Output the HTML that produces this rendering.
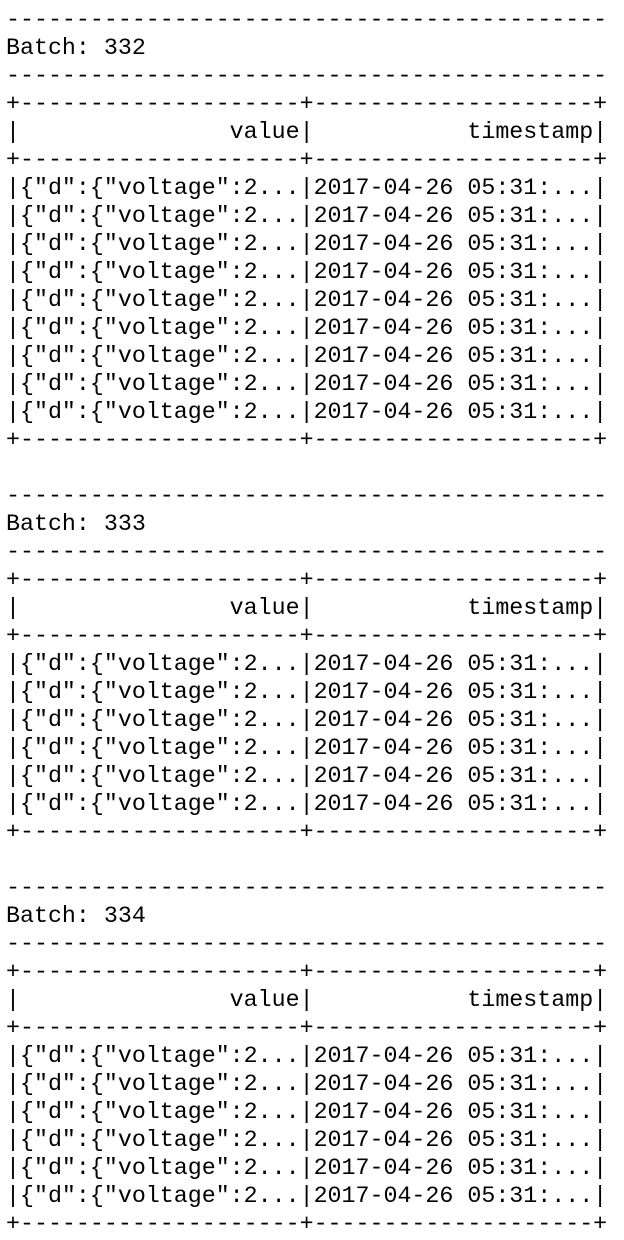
<!DOCTYPE html>
<html><head><meta charset="utf-8"><style>
html,body{margin:0;padding:0;background:#fff;width:624px;height:1240px;overflow:hidden}
pre{margin:0;position:absolute;left:6px;top:6px;font-family:"Liberation Mono",monospace;font-size:23.3px;line-height:28px;color:#000}
</style></head><body><pre>-------------------------------------------
Batch: 332
-------------------------------------------
+--------------------+--------------------+
|               value|           timestamp|
+--------------------+--------------------+
|{"d":{"voltage":2...|2017-04-26 05:31:...|
|{"d":{"voltage":2...|2017-04-26 05:31:...|
|{"d":{"voltage":2...|2017-04-26 05:31:...|
|{"d":{"voltage":2...|2017-04-26 05:31:...|
|{"d":{"voltage":2...|2017-04-26 05:31:...|
|{"d":{"voltage":2...|2017-04-26 05:31:...|
|{"d":{"voltage":2...|2017-04-26 05:31:...|
|{"d":{"voltage":2...|2017-04-26 05:31:...|
|{"d":{"voltage":2...|2017-04-26 05:31:...|
+--------------------+--------------------+

-------------------------------------------
Batch: 333
-------------------------------------------
+--------------------+--------------------+
|               value|           timestamp|
+--------------------+--------------------+
|{"d":{"voltage":2...|2017-04-26 05:31:...|
|{"d":{"voltage":2...|2017-04-26 05:31:...|
|{"d":{"voltage":2...|2017-04-26 05:31:...|
|{"d":{"voltage":2...|2017-04-26 05:31:...|
|{"d":{"voltage":2...|2017-04-26 05:31:...|
|{"d":{"voltage":2...|2017-04-26 05:31:...|
+--------------------+--------------------+

-------------------------------------------
Batch: 334
-------------------------------------------
+--------------------+--------------------+
|               value|           timestamp|
+--------------------+--------------------+
|{"d":{"voltage":2...|2017-04-26 05:31:...|
|{"d":{"voltage":2...|2017-04-26 05:31:...|
|{"d":{"voltage":2...|2017-04-26 05:31:...|
|{"d":{"voltage":2...|2017-04-26 05:31:...|
|{"d":{"voltage":2...|2017-04-26 05:31:...|
|{"d":{"voltage":2...|2017-04-26 05:31:...|
+--------------------+--------------------+</pre></body></html>
